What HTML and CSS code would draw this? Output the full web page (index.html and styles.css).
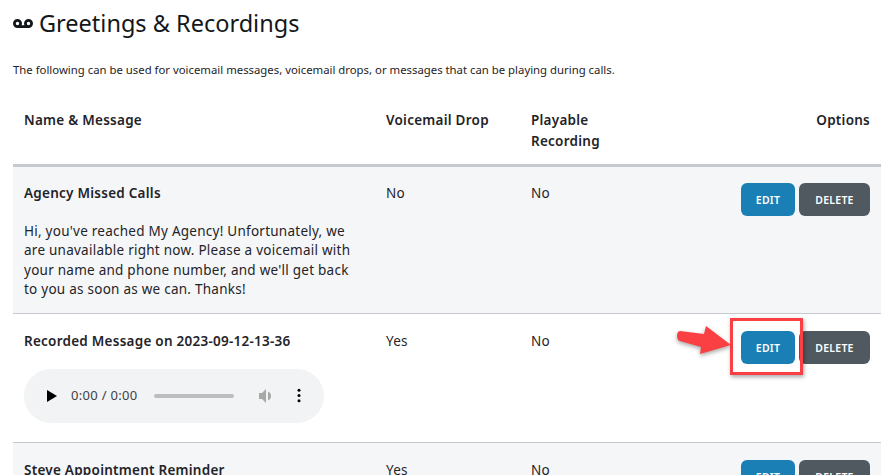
FILE: index.html
```html
<!DOCTYPE html>
<html lang="en">

<head>
    <meta charset="UTF-8">
    <meta name="viewport" content="width=device-width, initial-scale=1.0">
    <title>Greetings &amp; Recordings</title>
    <link rel="stylesheet" href="styles.css">
</head>

<body>
    <h1 class="page-title">
        <svg class="title-icon" viewBox="0 0 20 9" aria-hidden="true">
            <circle cx="4.500" cy="4.500" r="3.100" />
            <circle cx="15.500" cy="4.500" r="3.100" />
            <path d="M4.500 7.600h11" />
        </svg>
        Greetings &amp; Recordings
    </h1>
    <p class="intro">The following can be used for voicemail messages, voicemail drops, or messages that can be playing during calls.</p>

    <table class="recordings">
        <thead>
            <tr>
                <th class="col-name">Name &amp; Message</th>
                <th class="col-drop">Voicemail Drop</th>
                <th class="col-play">Playable<br>Recording</th>
                <th class="col-options">Options</th>
            </tr>
        </thead>
        <tbody>
            <tr class="shaded">
                <td>
                    <div class="rec-name">Agency Missed Calls</div>
                    <p class="rec-message">Hi, you've reached My Agency! Unfortunately, we are unavailable right now. Please a voicemail with your name and phone number, and we'll get back to you as soon as we can. Thanks!</p>
                </td>
                <td>No</td>
                <td>No</td>
                <td>
                    <div class="options">
                        <a class="btn btn-edit">EDIT</a>
                        <a class="btn btn-delete">DELETE</a>
                    </div>
                </td>
            </tr>
            <tr>
                <td>
                    <div class="rec-name">Recorded Message on 2023-09-12-13-36</div>
                    <div class="player">
                        <svg class="play" viewBox="0 0 10 12"><path d="M0 0l10 6L0 12z" /></svg>
                        <span class="time">0:00 / 0:00</span>
                        <span class="track"></span>
                        <svg class="volume" viewBox="0 0 16 16">
                            <path d="M1 5h3l4-4v14l-4-4H1z" />
                            <path d="M10 3.500c4 1.500 4 7.500 0 9z" />
                        </svg>
                        <svg class="more" viewBox="0 0 4 16">
                            <circle cx="2" cy="2.500" r="1.600" />
                            <circle cx="2" cy="8" r="1.600" />
                            <circle cx="2" cy="13.500" r="1.600" />
                        </svg>
                    </div>
                </td>
                <td>Yes</td>
                <td>No</td>
                <td>
                    <div class="options">
                        <span class="callout">
                            <span class="highlight"></span>
                            <svg class="arrow" viewBox="0 0 56 30" aria-hidden="true">
                                <path d="M4 6L28 9 30 1 55 20 24 29 25 22 4 16C0 15 0 6 4 6z" />
                            </svg>
                            <a class="btn btn-edit">EDIT</a>
                        </span>
                        <a class="btn btn-delete">DELETE</a>
                    </div>
                </td>
            </tr>
            <tr class="shaded">
                <td>
                    <div class="rec-name">Steve Appointment Reminder</div>
                </td>
                <td>Yes</td>
                <td>No</td>
                <td>
                    <div class="options">
                        <a class="btn btn-edit">EDIT</a>
                        <a class="btn btn-delete">DELETE</a>
                    </div>
                </td>
            </tr>
        </tbody>
    </table>
</body>

</html>
```

FILE: styles.css
```css
html,
body {
    height: 475px;
    overflow: hidden;
}

body {
    margin: 0;
    padding: 0 4px 0 13px;
    background-color: #fff;
    font-family: "Noto Sans", Arial, sans-serif;
    font-size: 13.500px;
    letter-spacing: 0.25px;
    color: #1f2428;
}

.page-title {
    display: flex;
    align-items: center;
    gap: 6px;
    margin: 0;
    padding-top: 6px;
    height: 34px;
    font-size: 23.500px;
    font-weight: 400;
    letter-spacing: 0;
    color: #14171a;
}

.title-icon {
    width: 20px;
    height: 9px;
    fill: none;
    stroke: #14171a;
    stroke-width: 2.800;
}

.intro {
    margin: 22px 0 0;
    font-size: 11.350px;
    line-height: 16px;
    letter-spacing: 0;
}

.recordings {
    width: 868px;
    margin-top: 20px;
    border-collapse: collapse;
    table-layout: fixed;
}

.recordings th {
    height: 67px;
    padding: 12px 11px 0;
    box-sizing: border-box;
    border-bottom: 3px solid #c6cad0;
    font-weight: 600;
    line-height: 21px;
    text-align: left;
    vertical-align: top;
}

.col-name {
    width: 362px;
}

.col-drop {
    width: 145px;
}

.col-play {
    width: 145px;
}

.recordings .col-options {
    text-align: right;
}

.recordings td {
    padding: 17px 11px 0;
    border-bottom: 1px solid #c6cad0;
    line-height: 20px;
    vertical-align: top;
}

.recordings tbody tr:first-child td {
    padding-top: 16px;
}

.shaded td {
    background-color: #f5f6f8;
}

.rec-name {
    font-weight: 600;
}

.rec-message {
    margin: 19px 0 13px;
    line-height: 19.500px;
}

.options {
    display: flex;
    justify-content: flex-end;
    gap: 4px;
}

.btn {
    display: block;
    height: 33px;
    box-sizing: border-box;
    border-radius: 6px;
    font-size: 10.500px;
    font-weight: 600;
    line-height: 34px;
    text-align: center;
    color: #fff;
}

.btn-edit {
    width: 54px;
    background-color: #1a7fb5;
}

.btn-delete {
    width: 71px;
    background-color: #50595f;
}

.callout {
    position: relative;
    display: block;
}

.highlight {
    position: absolute;
    left: -11px;
    top: -13px;
    width: 67px;
    height: 51px;
    border: 3px solid #fb4044;
    box-shadow: 1px 2px 4px rgba(0, 0, 0, 0.35);
}

.arrow {
    position: absolute;
    left: -65px;
    top: -6px;
    width: 56px;
    height: 30px;
    fill: #fb4044;
    filter: drop-shadow(0 2px 2px rgba(0, 0, 0, 0.35));
}

.player {
    display: flex;
    align-items: center;
    width: 300px;
    height: 54px;
    margin: 18px 0 19px;
    padding-left: 23px;
    box-sizing: border-box;
    border-radius: 27px;
    background-color: #f1f3f4;
}

.play {
    width: 10px;
    height: 12px;
    fill: #000;
}

.time {
    margin-left: 14px;
    margin-bottom: 2px;
    font-size: 13px;
    letter-spacing: 0.3px;
    color: #3f4245;
}

.track {
    width: 80px;
    height: 4px;
    margin-left: 17px;
    border-radius: 2px;
    background-color: #bdbdbd;
}

.volume {
    width: 16px;
    height: 16px;
    margin-left: 24px;
    fill: #a8a8a8;
}

.more {
    width: 4px;
    height: 15px;
    margin-left: 23px;
    fill: #000;
}
```
